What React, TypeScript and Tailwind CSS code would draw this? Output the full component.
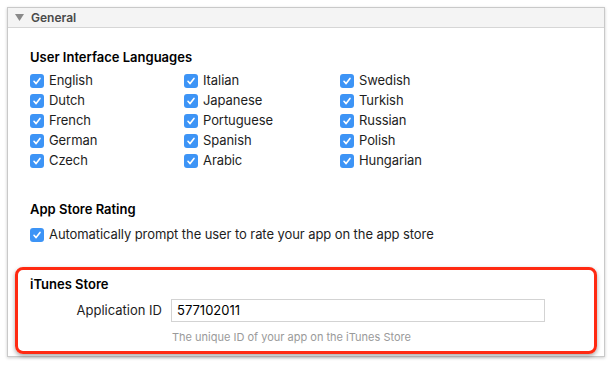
import React from "react";

const languages = [
  ["English", "Italian", "Swedish"],
  ["Dutch", "Japanese", "Turkish"],
  ["French", "Portuguese", "Russian"],
  ["German", "Spanish", "Polish"],
  ["Czech", "Arabic", "Hungarian"],
];

function Check({ label }: { label: string }) {
  return (
    <div className="flex h-5 items-center gap-[5px]">
      <span className="flex h-[14px] w-[14px] items-center justify-center rounded-[3px] bg-[#3d94f6]">
        <svg width="10" height="10" viewBox="0 0 10 10">
          <path d="M2 5.3 L4.1 7.6 L8 2.4" fill="none" stroke="white" strokeWidth="1.6" strokeLinecap="round" strokeLinejoin="round" />
        </svg>
      </span>
      <span className="text-[13px] tracking-[-0.08px] text-[#1d1d1d]">{label}</span>
    </div>
  );
}

export default function App() {
  return (
    <div className="h-[365px] w-[613px] bg-white p-[7px] pr-[8px] font-['Inter','Roboto',sans-serif]">
      <div className="flex h-[350px] flex-col border border-[#c9c9c9] bg-white shadow-[0_1px_3px_rgba(0,0,0,0.2)]">
        {/* header bar */}
        <div className="flex h-[20px] items-center gap-[7px] border-b border-[#d6d6d6] bg-[#f4f4f4] pl-[7px]">
          <svg width="9" height="7" viewBox="0 0 9 7">
            <path d="M0 0 H9 L4.5 7 Z" fill="#8a8a8a" />
          </svg>
          <span className="text-[12px] font-semibold text-[#4a4a4a]">General</span>
        </div>

        {/* languages */}
        <div className="pl-[22px] pt-[20px]">
          <h2 className="text-[13px] font-semibold leading-[18px] text-black">User Interface Languages</h2>
          <div className="mt-[5px] grid grid-cols-[154px_156px_1fr]">
            {languages.flat().map((l) => (
              <Check key={l} label={l} />
            ))}
          </div>
        </div>

        {/* rating */}
        <div className="pl-[22px] pt-[29px]">
          <h2 className="text-[13px] font-semibold leading-[18px] text-black">App Store Rating</h2>
          <div className="mt-[7px]">
            <Check label="Automatically prompt the user to rate your app on the app store" />
          </div>
        </div>

        {/* iTunes store, highlighted */}
        <div className="mx-[7px] mt-[22px] h-[87px] rounded-[8px] border-[3px] border-[#ff2a12] pl-[12px] shadow-[0_2px_4px_rgba(0,0,0,0.35)]">
          <h2 className="mt-[5px] text-[13px] font-semibold leading-[18px] text-black">iTunes Store</h2>
          <div className="mt-[6px] flex items-center gap-[9px]">
            <span className="w-[132px] text-right text-[13px] text-[#1d1d1d]">Application ID</span>
            <div className="flex h-[23px] w-[374px] items-center border border-[#d3d3d3] px-[5px] text-[13px] text-black">
              577102011
            </div>
          </div>
          <p className="ml-[142px] mt-[7px] text-[11px] text-[#9a9a9a]">The unique ID of your app on the iTunes Store</p>
        </div>
      </div>
    </div>
  );
}
